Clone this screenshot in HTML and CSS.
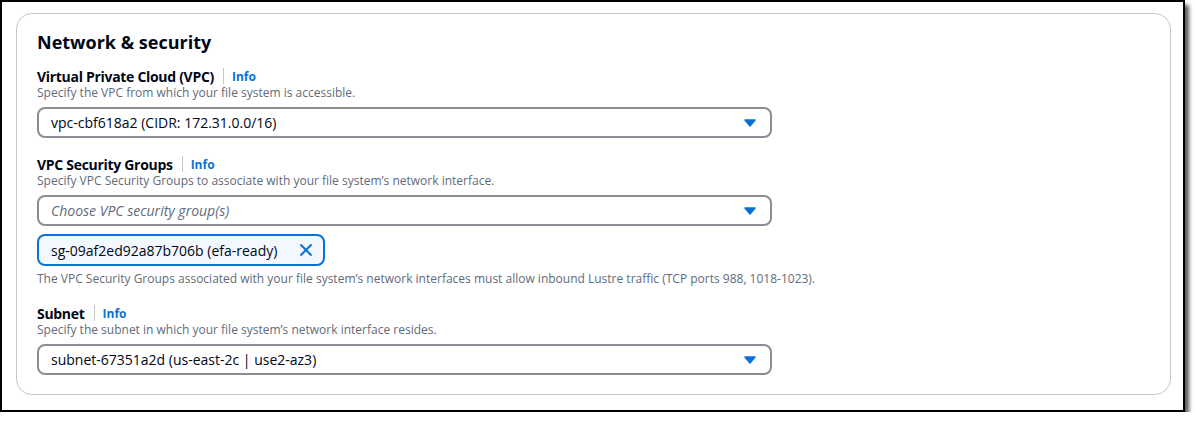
FILE: index.html
```html
<!DOCTYPE html>
<html lang="en">

<head>
    <meta charset="UTF-8">
    <title>Network &amp; security</title>
    <link rel="stylesheet" href="styles.css">
</head>

<body>
    <div class="frame">
        <div class="card">
            <h2 class="title">Network &amp; security</h2>

            <div class="field">
                <div class="label-row">
                    <span class="label">Virtual Private Cloud (VPC)</span>
                    <span class="divider"></span>
                    <a class="info" href="#">Info</a>
                </div>
                <div class="desc">Specify the VPC from which your file system is accessible.</div>
                <div class="select">
                    <span>vpc-cbf618a2 (CIDR: 172.31.0.0/16)</span>
                    <svg class="caret" width="12" height="8" viewBox="0 0 12 8"><path d="M1 1h10L6 7z" fill="#0972d3" stroke="#0972d3" stroke-width="1.5" stroke-linejoin="round"/></svg>
                </div>
            </div>

            <div class="field">
                <div class="label-row">
                    <span class="label">VPC Security Groups</span>
                    <span class="divider"></span>
                    <a class="info" href="#">Info</a>
                </div>
                <div class="desc">Specify VPC Security Groups to associate with your file system’s network interface.</div>
                <div class="select">
                    <span class="placeholder">Choose VPC security group(s)</span>
                    <svg class="caret" width="12" height="8" viewBox="0 0 12 8"><path d="M1 1h10L6 7z" fill="#0972d3" stroke="#0972d3" stroke-width="1.5" stroke-linejoin="round"/></svg>
                </div>
                <div class="token">
                    <span>sg-09af2ed92a87b706b (efa-ready)</span>
                    <svg class="dismiss" width="14" height="14" viewBox="0 0 14 14"><path d="M1.5 1.5l11 11M12.5 1.5l-11 11" stroke="#0972d3" stroke-width="2" fill="none"/></svg>
                </div>
                <div class="note">The VPC Security Groups associated with your file system’s network interfaces must allow inbound Lustre traffic (TCP ports 988, 1018-1023).</div>
            </div>

            <div class="field">
                <div class="label-row">
                    <span class="label">Subnet</span>
                    <span class="divider"></span>
                    <a class="info" href="#">Info</a>
                </div>
                <div class="desc">Specify the subnet in which your file system’s network interface resides.</div>
                <div class="select">
                    <span>subnet-67351a2d (us-east-2c | use2-az3)</span>
                    <svg class="caret" width="12" height="8" viewBox="0 0 12 8"><path d="M1 1h10L6 7z" fill="#0972d3" stroke="#0972d3" stroke-width="1.5" stroke-linejoin="round"/></svg>
                </div>
            </div>
        </div>
    </div>
</body>

</html>
```

FILE: styles.css
```css
body {
    margin: 0;
    background: #fff;
    font-family: "Open Sans", "Noto Sans", sans-serif;
    color: #000716;
}

.frame {
    width: 1155px;
    height: 397px;
    border: 2px solid #000;
    box-shadow: 4px 5px 4px rgba(0, 0, 0, 0.65);
    background: #fff;
    padding: 11px 12px 0 14px;
}

.card {
    border: 1px solid #c6c6cd;
    border-radius: 16px;
    padding: 16px 20px 20px 20px;
    height: 382px;
    box-sizing: border-box;
}

.title {
    margin: 0 0 13px 0;
    font-size: 18px;
    font-weight: 700;
    line-height: 24px;
}

.field {
    margin-bottom: 17px;
}

.label-row {
    display: flex;
    align-items: center;
    height: 18px;
}

.label {
    font-size: 14px;
    font-weight: 700;
    letter-spacing: -0.3px;
}

.divider {
    width: 1px;
    height: 16px;
    background: #c6c6cd;
    margin: 0 8px 0 9px;
}

.info {
    font-size: 12px;
    font-weight: 700;
    color: #0972d3;
    text-decoration: none;
}

.desc {
    font-size: 12px;
    line-height: 16px;
    color: #5f6b7a;
    margin-bottom: 6px;
}

.select {
    width: 735px;
    height: 31px;
    border: 2px solid #8c8c94;
    border-radius: 8px;
    box-sizing: border-box;
    display: flex;
    align-items: center;
    justify-content: space-between;
    padding: 0 14px 0 12px;
    font-size: 14px;
}

.placeholder {
    font-style: italic;
    color: #5f6b7a;
}

.token {
    display: inline-flex;
    align-items: center;
    gap: 22px;
    height: 32px;
    margin-top: 8px;
    border: 2px solid #0972d3;
    border-radius: 8px;
    background: #f2f8fd;
    box-sizing: border-box;
    padding: 0 10px 0 12px;
    font-size: 14px;
}

.note {
    font-size: 12px;
    line-height: 16px;
    color: #5f6b7a;
    margin-top: 5px;
}
```
